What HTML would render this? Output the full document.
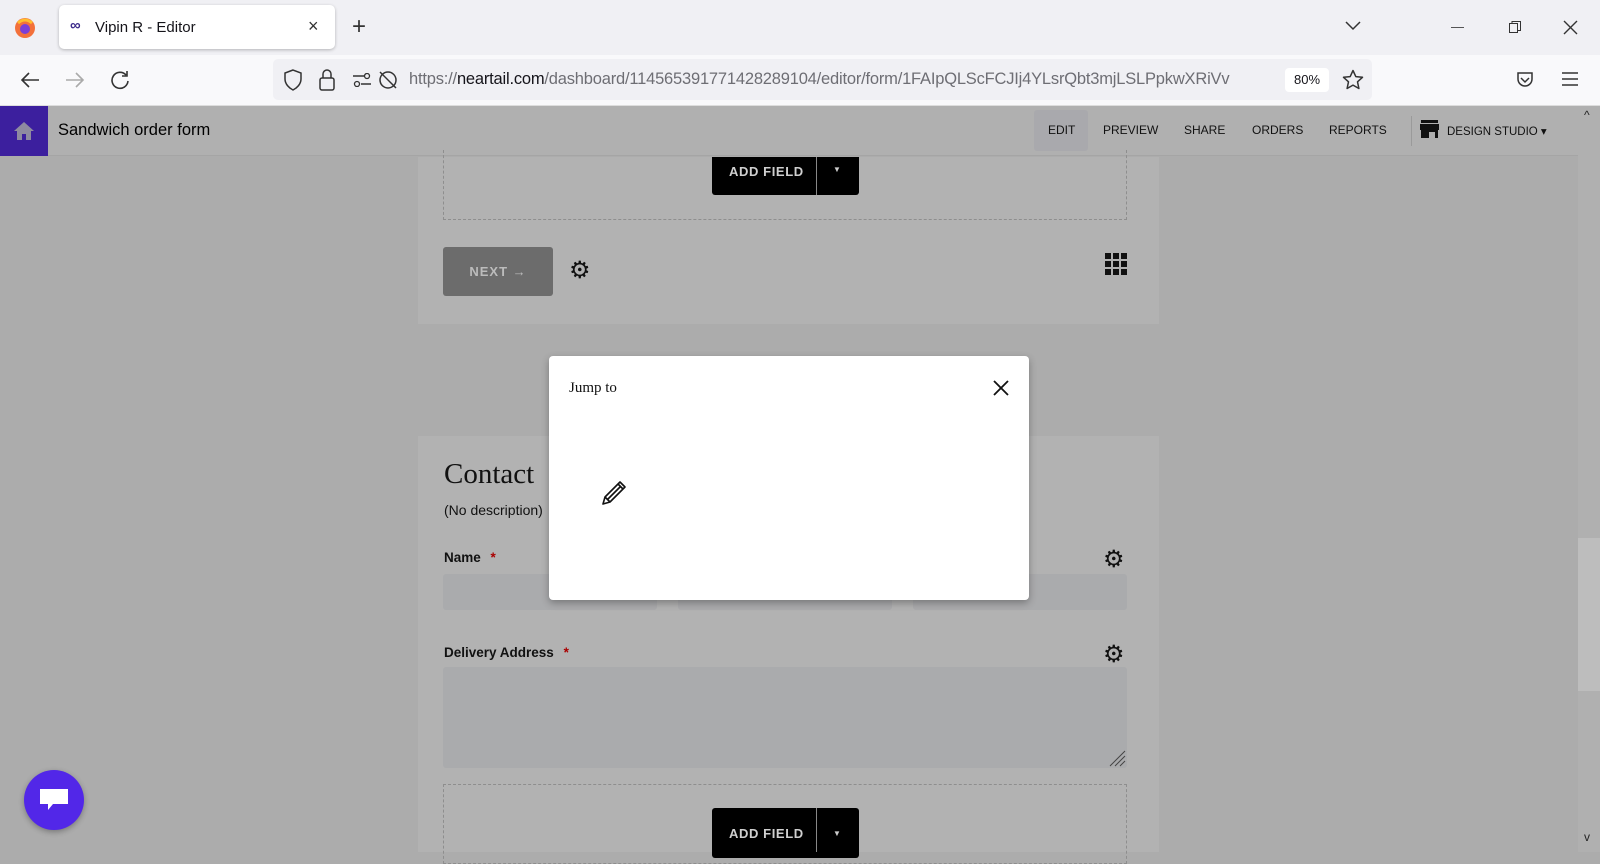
<!DOCTYPE html>
<html><head><meta charset="utf-8"><style>
*{box-sizing:border-box;margin:0;padding:0}
body{width:1600px;height:852px;overflow:hidden;font-family:"Liberation Sans",sans-serif;background:#acacac;position:relative}
.abs{position:absolute}
.tabbar{left:0;top:0;width:1600px;height:55px;background:#f0f0f4}
.toolbar{left:0;top:55px;width:1600px;height:51px;background:#f9f9fb;border-bottom:1px solid #ddd}
.tab{left:59px;top:5px;width:276px;height:44px;background:#fff;border-radius:5px;box-shadow:0 1px 3px rgba(0,0,0,.25)}
.url{left:273px;top:59px;width:1099px;height:41px;background:#f0f0f4;border-radius:5px}
.hdr{left:0;top:106px;width:1578px;height:50px;background:#b0b0b0;border-bottom:1px solid #a5a5a5}
.nav{top:123px;font-size:12px;color:#111}
.card{background:#b2b2b2}
.dash{border:1px dashed #8e8e8e}
.btn{background:#000;color:#cfcfcf;font-size:13px;font-weight:bold;letter-spacing:.5px;border-radius:3px}
.lbl{font-size:13.5px;color:#111;font-weight:bold}
.inp{background:#aaabad;border-radius:3px}
</style></head><body>
<div class="abs tabbar"></div>
<svg class="abs" style="left:14px;top:17px" width="22" height="22" viewBox="0 0 22 22"><circle cx="11" cy="11" r="10" fill="#f3703a"/><circle cx="11" cy="12" r="5" fill="#7b3fd6"/><path d="M4 6 Q11 0 18 6" stroke="#ffbd2e" stroke-width="3" fill="none"/></svg>
<div class="abs tab"></div>
<div class="abs" style="left:70px;top:17px;font-size:15px;color:#3b2a8a;font-weight:bold">∞</div>
<div class="abs" style="left:95px;top:19px;font-size:15px;color:#15141a">Vipin R - Editor</div>
<div class="abs" style="left:308px;top:16px;font-size:18px;color:#333">×</div>
<div class="abs" style="left:352px;top:13px;font-size:24px;color:#333">+</div>
<svg class="abs" style="left:1345px;top:20px" width="16" height="12"><path d="M1 2 L8 9 L15 2" stroke="#333" stroke-width="1.5" fill="none"/></svg>
<div class="abs" style="left:1451px;top:27px;width:13px;height:1px;background:#555"></div>
<svg class="abs" style="left:1508px;top:20px" width="14" height="14"><rect x="1.5" y="3.5" width="8" height="9" fill="none" stroke="#333"/><path d="M4 3.5V1.5H12.5V10.5H9.5" fill="none" stroke="#333"/></svg>
<svg class="abs" style="left:1563px;top:20px" width="15" height="15"><path d="M1 1L14 14M14 1L1 14" stroke="#333" stroke-width="1.4"/></svg>
<div class="abs toolbar"></div>
<svg class="abs" style="left:20px;top:71px" width="20" height="18"><path d="M19 9H2M9 2L2 9L9 16" stroke="#333" stroke-width="1.6" fill="none"/></svg>
<svg class="abs" style="left:65px;top:71px" width="20" height="18"><path d="M1 9H18M11 2L18 9L11 16" stroke="#aaa" stroke-width="1.6" fill="none"/></svg>
<svg class="abs" style="left:110px;top:70px" width="20" height="20"><path d="M16 5A8 8 0 1 0 18 11M17 1V6H12" stroke="#333" stroke-width="1.6" fill="none"/></svg>
<div class="abs url"></div>
<svg class="abs" style="left:283px;top:69px" width="20" height="22"><path d="M10 1L2 4V10C2 15 6 19 10 21C14 19 18 15 18 10V4Z" stroke="#333" stroke-width="1.5" fill="none"/></svg>
<svg class="abs" style="left:318px;top:68px" width="18" height="24"><rect x="2" y="10" width="14" height="12" rx="2" stroke="#333" stroke-width="1.5" fill="none"/><path d="M5 10V6A4 4 0 0 1 13 6V10" stroke="#333" stroke-width="1.5" fill="none"/></svg>
<svg class="abs" style="left:352px;top:73px" width="20" height="14"><path d="M1 3H12M9 11H19" stroke="#333" stroke-width="1.5"/><circle cx="15" cy="3" r="2.5" stroke="#333" stroke-width="1.3" fill="none"/><circle cx="5" cy="11" r="2.5" stroke="#333" stroke-width="1.3" fill="none"/></svg>
<svg class="abs" style="left:378px;top:70px" width="20" height="20"><circle cx="10" cy="10" r="8" stroke="#333" stroke-width="1.5" fill="none"/><path d="M2 2L18 18" stroke="#333" stroke-width="1.5"/></svg>
<div class="abs" style="left:409px;top:70px;font-size:16.5px;color:#6e6e74;white-space:nowrap;width:865px;overflow:hidden;letter-spacing:-0.2px">https://<span style="color:#15141a">neartail.com</span>/dashboard/114565391771428289104/editor/form/1FAIpQLScFCJIj4YLsrQbt3mjLSLPpkwXRiVv</div>
<div class="abs" style="left:1285px;top:68px;width:44px;height:24px;background:#fff;border-radius:4px;font-size:13px;color:#15141a;text-align:center;line-height:24px">80%</div>
<svg class="abs" style="left:1342px;top:69px" width="22" height="22" viewBox="0 0 22 22"><path d="M11 1.5L13.8 7.6L20.5 8.3L15.5 12.8L16.9 19.5L11 16.1L5.1 19.5L6.5 12.8L1.5 8.3L8.2 7.6Z" stroke="#333" stroke-width="1.5" fill="none" stroke-linejoin="round"/></svg>
<svg class="abs" style="left:1515px;top:70px" width="20" height="20"><path d="M3 3H17V9A7 7 0 0 1 3 9Z" stroke="#333" stroke-width="1.5" fill="none"/><path d="M6 8L10 12L14 8" stroke="#333" stroke-width="1.5" fill="none"/></svg>
<svg class="abs" style="left:1562px;top:72px" width="16" height="14"><path d="M0 1H16M0 7H16M0 13H16" stroke="#333" stroke-width="1.5"/></svg>

<div class="abs hdr"></div>
<div class="abs" style="left:0;top:106px;width:48px;height:50px;background:#3c1f9e"></div>
<svg class="abs" style="left:13px;top:121px" width="22" height="20"><path d="M11 1L1 10H4V19H9V13H13V19H18V10H21Z" fill="#8e8aa0"/></svg>
<div class="abs" style="left:58px;top:121px;font-size:16.5px;color:#000">Sandwich order form</div>
<div class="abs" style="left:1034px;top:110px;width:54px;height:41px;background:#a9a9ad;border-radius:3px"></div>
<div class="abs nav" style="left:1048px">EDIT</div>
<div class="abs nav" style="left:1103px">PREVIEW</div>
<div class="abs nav" style="left:1184px">SHARE</div>
<div class="abs nav" style="left:1252px">ORDERS</div>
<div class="abs nav" style="left:1329px">REPORTS</div>
<div class="abs" style="left:1411px;top:116px;width:1px;height:30px;background:#9a9a9a"></div>
<svg class="abs" style="left:1420px;top:120px" width="19" height="18"><rect x="1" y="0" width="17" height="3" fill="#111"/><rect x="0" y="4" width="19" height="6" fill="#111"/><rect x="1" y="10" width="17" height="8" fill="#111"/><rect x="9" y="12" width="6" height="6" fill="#b0b0b0"/></svg>
<div class="abs nav" style="left:1447px;top:124px;font-size:11.5px">DESIGN STUDIO ▾</div>

<div class="abs" style="left:1578px;top:106px;width:22px;height:746px;background:#b0b0b0"></div>
<div class="abs" style="left:1578px;top:538px;width:22px;height:153px;background:#bdbdbd"></div>
<div class="abs" style="left:1584px;top:108px;font-size:12px;color:#222">^</div>
<div class="abs" style="left:1584px;top:830px;font-size:12px;color:#222">v</div>

<div class="abs card" style="left:418px;top:157px;width:741px;height:167px"></div>
<div class="abs dash" style="left:443px;top:150px;width:684px;height:70px;border-top:none"></div>
<div class="abs btn" style="left:712px;top:157px;width:147px;height:38px;border-radius:0 0 3px 3px"></div>
<div class="abs" style="left:729px;top:164px;font-size:13px;color:#cfcfcf;font-weight:bold;letter-spacing:.6px">ADD FIELD</div>
<div class="abs" style="left:816px;top:157px;width:1px;height:38px;background:#888"></div>
<div class="abs" style="left:833px;top:165px;font-size:8px;color:#ccc">▼</div>
<div class="abs" style="left:443px;top:247px;width:110px;height:49px;background:#6c6c6c;border-radius:3px;color:#bcbcbc;font-size:13px;font-weight:bold;letter-spacing:1px;text-align:center;line-height:49px">NEXT →</div>
<div class="abs" style="left:569px;top:259px;font-size:24px;color:#111;line-height:1">⚙</div>
<svg class="abs" style="left:1105px;top:253px" width="23" height="22"><g fill="#111"><rect x="0" y="0" width="6" height="6"/><rect x="8" y="0" width="6" height="6"/><rect x="16" y="0" width="6" height="6"/><rect x="0" y="8" width="6" height="6"/><rect x="8" y="8" width="6" height="6"/><rect x="16" y="8" width="6" height="6"/><rect x="0" y="16" width="6" height="6"/><rect x="8" y="16" width="6" height="6"/><rect x="16" y="16" width="6" height="6"/></g></svg>

<div class="abs card" style="left:418px;top:436px;width:741px;height:416px"></div>
<div class="abs" style="left:444px;top:458px;font-size:29px;font-family:'Liberation Serif',serif;color:#111">Contact</div>
<div class="abs" style="left:444px;top:502px;font-size:14px;color:#111">(No description)</div>
<div class="abs lbl" style="left:444px;top:550px">Name <span style="color:#a00;margin-left:6px">*</span></div>
<div class="abs" style="left:1103px;top:548px;font-size:24px;color:#111;line-height:1">⚙</div>
<div class="abs inp" style="left:443px;top:574px;width:214px;height:36px"></div>
<div class="abs inp" style="left:678px;top:574px;width:214px;height:36px"></div>
<div class="abs inp" style="left:913px;top:574px;width:214px;height:36px"></div>
<div class="abs lbl" style="left:444px;top:645px">Delivery Address <span style="color:#a00;margin-left:6px">*</span></div>
<div class="abs" style="left:1103px;top:643px;font-size:24px;color:#111;line-height:1">⚙</div>
<div class="abs inp" style="left:443px;top:667px;width:684px;height:101px"></div>
<svg class="abs" style="left:1108px;top:750px" width="18" height="17"><path d="M2 16L17 1M7 16L17 6M12 16L17 11" stroke="#444" stroke-width="1"/></svg>
<div class="abs dash" style="left:443px;top:784px;width:684px;height:80px"></div>
<div class="abs btn" style="left:712px;top:808px;width:147px;height:50px"></div>
<div class="abs" style="left:729px;top:826px;font-size:13px;color:#cfcfcf;font-weight:bold;letter-spacing:.6px">ADD FIELD</div>
<div class="abs" style="left:816px;top:808px;width:1px;height:44px;background:#888"></div>
<div class="abs" style="left:833px;top:829px;font-size:8px;color:#ccc">▼</div>

<div class="abs" style="left:24px;top:770px;width:60px;height:60px;border-radius:50%;background:#5227e8;box-shadow:0 2px 6px rgba(0,0,0,.3)"></div>
<svg class="abs" style="left:39px;top:787px" width="30" height="26"><path d="M1 2H29V17H14L9 23V17H1Z" fill="#fff"/></svg>

<div class="abs" style="left:549px;top:356px;width:480px;height:244px;background:#fff;border-radius:4px;box-shadow:0 3px 8px rgba(0,0,0,.3)"></div>
<div class="abs" style="left:569px;top:380px;font-size:15px;font-family:'Liberation Serif',serif;color:#111">Jump to</div>
<svg class="abs" style="left:993px;top:380px" width="16" height="16"><path d="M1 1L15 15M15 1L1 15" stroke="#111" stroke-width="1.8"/></svg>
<svg class="abs" style="left:601px;top:480px" width="26" height="26" viewBox="0 0 26 26"><path d="M19 2L24 7L9 22L2 24L4 17Z M17 4L22 9 M4 17L9 22 M7 19L19 7" stroke="#111" stroke-width="1.6" fill="none" stroke-linejoin="round"/></svg>
</body></html>
